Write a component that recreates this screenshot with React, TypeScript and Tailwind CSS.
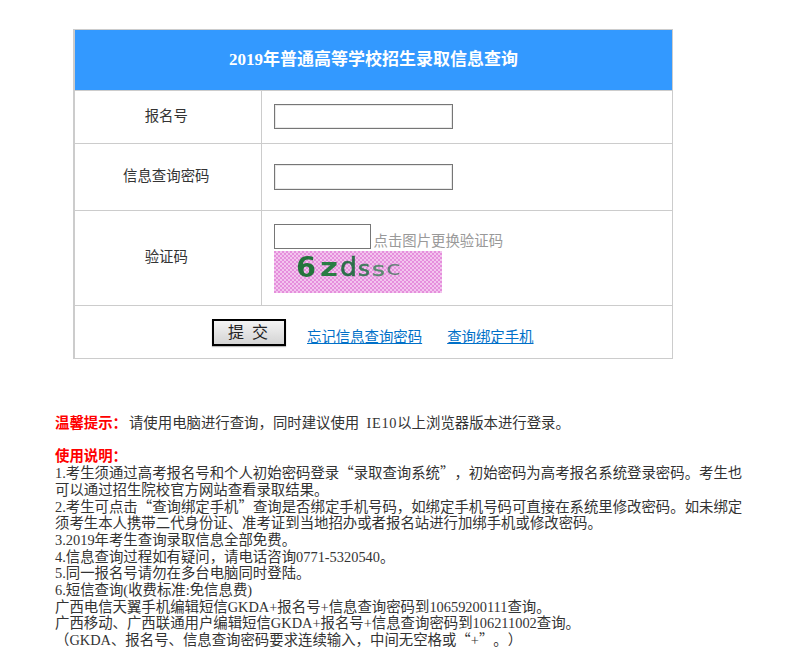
const font = "font-['Liberation_Serif','Noto_Sans_CJK_SC',serif]"

function Quote({ children }: { children: string }) {
  return <span className="font-['Noto_Sans_CJK_SC',serif] leading-none">{children}</span>
}

function Captcha() {
  return (
    <svg width="168" height="42" className="block">
      <defs>
        <pattern id="dots" width="4" height="4" patternUnits="userSpaceOnUse">
          <rect width="4" height="4" fill="#f3c4ee" />
          <rect width="2" height="2" fill="#e58fdc" />
          <rect x="2" y="2" width="2" height="2" fill="#e58fdc" />
        </pattern>
      </defs>
      <rect width="168" height="42" fill="url(#dots)" />
      <g fontFamily="'DejaVu Sans', sans-serif" className="blur-[0.4px]">
        <text x="22" y="26" fontSize="28" fontWeight="bold" fill="#24753c" textLength="20" lengthAdjust="spacingAndGlyphs">6</text>
        <text x="46" y="25" fontSize="24" fontWeight="bold" fill="#2a7d45" textLength="18" lengthAdjust="spacingAndGlyphs">z</text>
        <text x="66" y="25" fontSize="26" fill="#2c6f4a" stroke="#2c6f4a" strokeWidth="0.6" textLength="17" lengthAdjust="spacingAndGlyphs">d</text>
        <text x="84" y="25" fontSize="21" fill="#3d7a5a" stroke="#3d7a5a" strokeWidth="0.6" textLength="12" lengthAdjust="spacingAndGlyphs">s</text>
        <text x="98" y="25" fontSize="20" fill="#5a8a70" stroke="#5a8a70" strokeWidth="0.4" textLength="13" lengthAdjust="spacingAndGlyphs">s</text>
        <text x="112" y="24" fontSize="19" fill="#66807a" textLength="15" lengthAdjust="spacingAndGlyphs">c</text>
      </g>
    </svg>
  )
}

export default function App() {
  return (
    <div className={`${font} w-[787px] h-[672px] overflow-hidden bg-white text-[14.4px] text-[#333] pt-[29px] [text-spacing-trim:space-all]`}>
      <table className="ml-[73px] w-[600px] table-fixed border-collapse border-l-2 border-[#ccc]">
        <colgroup>
          <col className="w-[187px]" />
          <col />
        </colgroup>
        <tbody>
          <tr>
            <td colSpan={2} className="h-[61px] bg-[#3399ff] border border-[#ccc] text-center text-[17px] font-bold text-white">
              2019年普通高等学校招生录取信息查询
            </td>
          </tr>
          <tr>
            <td className="h-[53px] border border-[#ccc] text-center pr-[3px]">报名号</td>
            <td className="border border-[#ccc] pl-[12px] pb-[2px]">
              <input className="block w-[179px] h-[25px] border border-[#767676] bg-white shadow-[inset_0_0_0_1px_#e8e8e8]" />
            </td>
          </tr>
          <tr>
            <td className="h-[67px] border border-[#ccc] text-center pr-[3px]">信息查询密码</td>
            <td className="border border-[#ccc] pl-[12px]">
              <input className="block w-[179px] h-[26px] border border-[#767676] bg-white shadow-[inset_0_0_0_1px_#e8e8e8]" />
            </td>
          </tr>
          <tr>
            <td className="h-[95px] border border-[#ccc] text-center pr-[3px]">验证码</td>
            <td className="border border-[#ccc] pl-[12px]">
              <div className="flex items-end gap-[3px] text-[#999] leading-[17px]">
                <input className="block w-[97px] h-[25px] border border-[#767676] bg-white" />
                <span className="mb-[-1px]">点击图片更换验证码</span>
              </div>
              <div className="mt-[2px]">
                <Captcha />
              </div>
            </td>
          </tr>
          <tr>
            <td colSpan={2} className="h-[53px] border border-[#ccc]">
              <div className="flex items-start pl-[137px]">
                <button className="w-[74px] h-[27px] border-2 border-black bg-gradient-to-b from-[#f4f4f4] to-[#d4d4d4] text-[16px] text-[#222] tracking-[2px] shadow-[0_1px_1px_#bbb]">
                  提 交
                </button>
                <a className="ml-[21px] mt-[10px] text-[#0070c8] underline leading-[17px]">忘记信息查询密码</a>
                <a className="ml-[25px] mt-[10px] text-[#0070c8] underline leading-[17px]">查询绑定手机</a>
              </div>
            </td>
          </tr>
        </tbody>
      </table>

      <div className="ml-[55px] mt-[56px] w-[690px] leading-[16.7px]">
        <p>
          <b className="text-[#f00] mr-[2px]">温馨提示：</b>请使用电脑进行查询，同时建议使用&nbsp; <span className="tracking-[0.7px]">IE10</span>以上浏览器版本进行登录。
        </p>
        <p className="mt-[16.7px]">
          <b className="text-[#f00]">使用说明：</b>
        </p>
        <p>1.考生须通过高考报名号和个人初始密码登录<Quote>“</Quote>录取查询系统<Quote>”</Quote>，初始密码为高考报名系统登录密码。考生也可以通过招生院校官方网站查看录取结果。</p>
        <p>2.考生可点击<Quote>“</Quote>查询绑定手机<Quote>”</Quote>查询是否绑定手机号码，如绑定手机号码可直接在系统里修改密码。如未绑定须考生本人携带二代身份证、准考证到当地招办或者报名站进行加绑手机或修改密码。</p>
        <p>3.2019年考生查询录取信息全部免费。</p>
        <p>4.信息查询过程如有疑问，请电话咨询0771-5320540。</p>
        <p>5.同一报名号请勿在多台电脑同时登陆。</p>
        <p>6.短信查询(收费标准:免信息费)</p>
        <p>广西电信天翼手机编辑短信GKDA+报名号+信息查询密码到10659200111查询。</p>
        <p>广西移动、广西联通用户编辑短信GKDA+报名号+信息查询密码到106211002查询。</p>
        <p>（GKDA、报名号、信息查询密码要求连续输入，中间无空格或<Quote>“</Quote>+<Quote>”</Quote>。）</p>
      </div>
    </div>
  )
}
